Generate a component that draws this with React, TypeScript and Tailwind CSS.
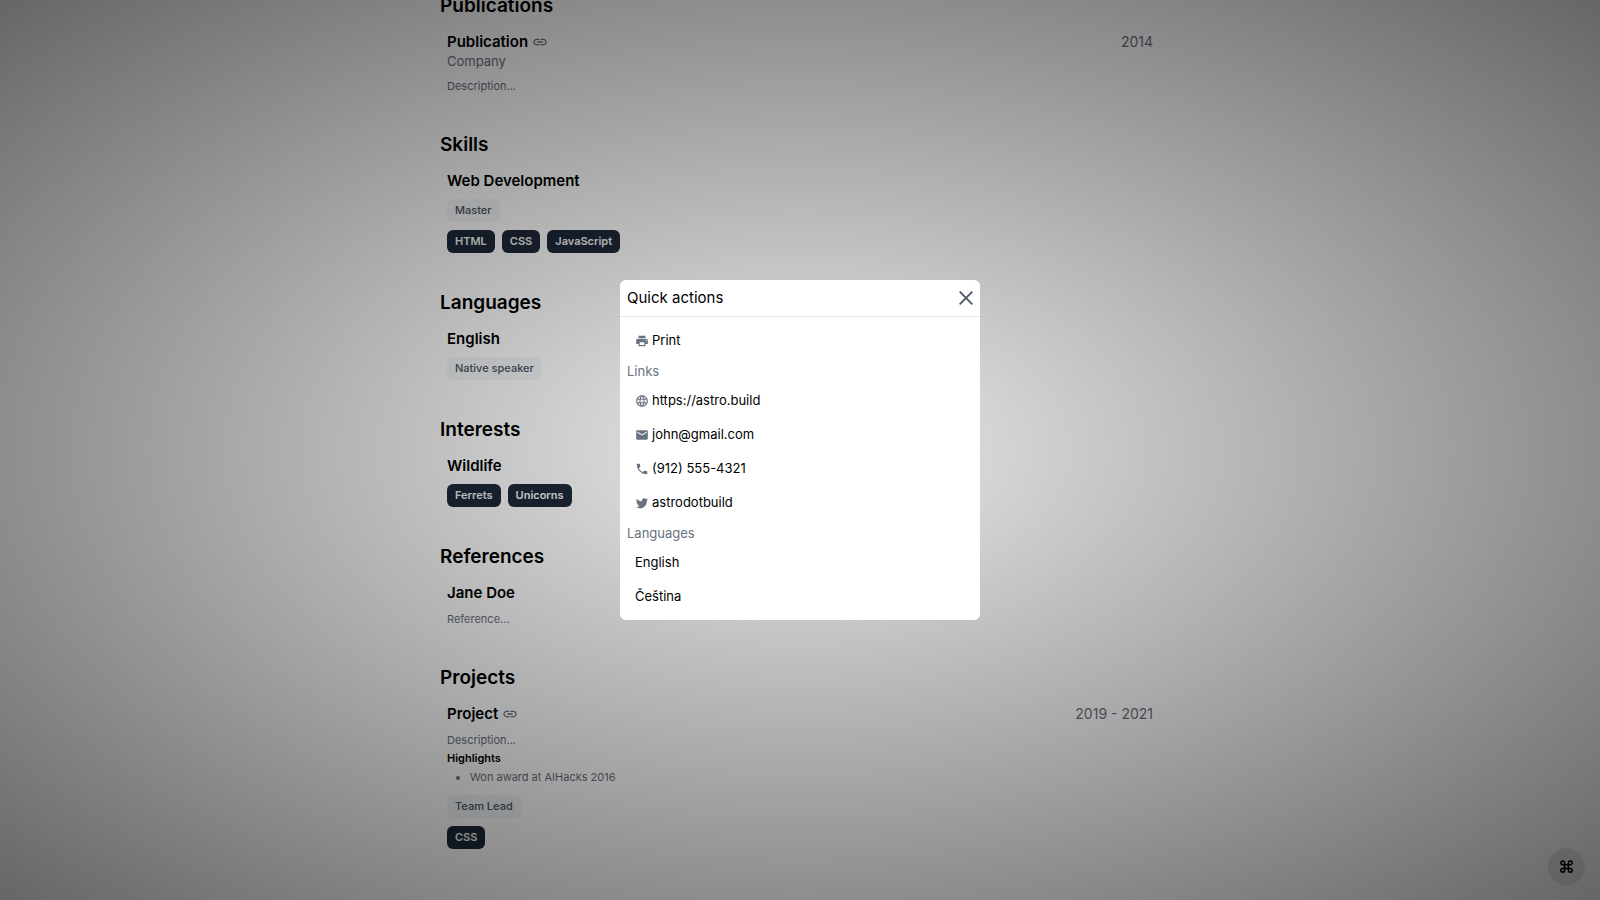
import clsx from "clsx";
import React from "react";
import { MdEmail, MdLanguage, MdLink, MdLocalPhone, MdPrint } from "react-icons/md";

function Section({ title, children }: { title: string; children: React.ReactNode }) {
  return (
    <section className="mb-9">
      <h2 className="text-[19px] leading-7 font-semibold">{title}</h2>
      <div className="px-[7px] pt-3">{children}</div>
    </section>
  );
}

function ItemHeader({ title, href, date }: { title: string; href?: string; date?: string }) {
  return (
    <div className="flex items-center justify-between text-[15px] leading-5">
      <h3 className="flex items-center gap-1 font-semibold">
        {title}
        {href && (
          <a href={href} aria-label={`Open ${title}`} className="text-gray-500">
            <MdLink className="size-4" />
          </a>
        )}
      </h3>
      {date && <time className="text-[14px] text-gray-500">{date}</time>}
    </div>
  );
}

function Tags({ items, muted = false }: { items: string[]; muted?: boolean }) {
  return (
    <ul className="mt-2 flex flex-wrap gap-[7px] text-[11px] leading-[23px]">
      {items.map((item) => (
        <li
          key={item}
          className={clsx(
            "rounded-md px-2",
            muted ? "bg-[#f4f6f8] font-medium text-gray-600" : "bg-gray-800 font-semibold text-gray-100",
          )}
        >
          {item}
        </li>
      ))}
    </ul>
  );
}

function Description({ children }: { children: React.ReactNode }) {
  return <p className="mt-[7px] text-[11px] leading-[18px] text-gray-500">{children}</p>;
}

function Resume() {
  return (
    <main className="mx-auto -mt-2 max-w-[720px]">
      <Section title="Publications">
        <ItemHeader title="Publication" href="#publication" date="2014" />
        <p className="text-[13px] leading-[18px] text-gray-500">Company</p>
        <Description>Description...</Description>
      </Section>
      <Section title="Skills">
        <ItemHeader title="Web Development" />
        <Tags items={["Master"]} muted />
        <Tags items={["HTML", "CSS", "JavaScript"]} />
      </Section>
      <Section title="Languages">
        <ItemHeader title="English" />
        <Tags items={["Native speaker"]} muted />
      </Section>
      <Section title="Interests">
        <ItemHeader title="Wildlife" />
        <Tags items={["Ferrets", "Unicorns"]} />
      </Section>
      <Section title="References">
        <ItemHeader title="Jane Doe" />
        <Description>Reference...</Description>
      </Section>
      <Section title="Projects">
        <ItemHeader title="Project" href="#project" date="2019 - 2021" />
        <Description>Description...</Description>
        <h4 className="text-[11px] leading-[19px] font-semibold">Highlights</h4>
        <ul className="list-disc pl-[23px] text-[11px] leading-[19px] text-gray-500">
          <li>Won award at AIHacks 2016</li>
        </ul>
        <Tags items={["Team Lead"]} muted />
        <Tags items={["CSS"]} />
      </Section>
    </main>
  );
}

function TwitterIcon({ className }: { className?: string }) {
  return (
    <svg viewBox="0 0 24 24" fill="currentColor" className={className}>
      <path d="M22.46 6c-.77.35-1.6.58-2.46.69.88-.53 1.56-1.37 1.88-2.38-.83.5-1.75.85-2.72 1.05C18.37 4.5 17.26 4 16 4c-2.35 0-4.27 1.92-4.27 4.29 0 .34.04.67.11.98C8.28 9.09 5.11 7.38 3 4.79c-.37.63-.58 1.37-.58 2.15 0 1.49.75 2.81 1.91 3.56-.71 0-1.37-.2-1.95-.5v.03c0 2.08 1.48 3.82 3.44 4.21a4.22 4.22 0 0 1-1.93.07 4.28 4.28 0 0 0 4 2.98 8.521 8.521 0 0 1-5.33 1.84c-.34 0-.68-.02-1.02-.06C3.44 20.29 5.7 21 8.12 21 16 21 20.33 14.46 20.33 8.79c0-.19 0-.37-.01-.56.84-.6 1.56-1.36 2.14-2.23z" />
    </svg>
  );
}

const links = [
  { label: "https://astro.build", href: "#website", icon: MdLanguage },
  { label: "john@gmail.com", href: "#email", icon: MdEmail },
  { label: "(912) 555-4321", href: "#phone", icon: MdLocalPhone },
  { label: "astrodotbuild", href: "#twitter", icon: TwitterIcon },
];

const languages = ["English", "Čeština"];

const rowClass = "flex h-[34px] w-full items-center gap-[3px] px-2";

function QuickActions() {
  return (
    <div className="fixed inset-0 flex items-center justify-center bg-[radial-gradient(ellipse,rgba(0,0,0,0.08),rgba(0,0,0,0.6))]">
      <div role="dialog" aria-labelledby="quick-actions" className="w-[360px] rounded-md bg-white">
        <div className="flex h-[37px] items-center justify-between border-b border-gray-200 px-[7px]">
          <h2 id="quick-actions" className="text-[15px]">
            Quick actions
          </h2>
          <button type="button" aria-label="Close" className="text-gray-600">
            <svg viewBox="0 0 14 14" className="size-[14px]" stroke="currentColor" strokeWidth="1.8">
              <path d="M.7.7l12.6 12.6M13.3.7L.7 13.3" />
            </svg>
          </button>
        </div>
        <div className="px-[7px] pt-[7px] pb-[6px] text-[13px]">
          <button type="button" className={rowClass}>
            <MdPrint className="size-[14px] text-gray-500" />
            Print
          </button>
          <h3 className="leading-[26px] text-gray-500">Links</h3>
          {links.map(({ label, href, icon: Icon }) => (
            <a key={label} href={href} className={rowClass}>
              <Icon className="size-[14px] text-gray-500" />
              {label}
            </a>
          ))}
          <h3 className="leading-[26px] text-gray-500">Languages</h3>
          {languages.map((language) => (
            <button key={language} type="button" className={rowClass}>
              {language}
            </button>
          ))}
        </div>
      </div>
    </div>
  );
}

export default function App(): React.JSX.Element {
  return (
    <div className="flow-root h-screen overflow-hidden bg-white font-[Inter,sans-serif] text-black">
      <Resume />
      <button
        type="button"
        aria-label="Open quick actions"
        className="fixed right-[15px] bottom-[15px] flex size-[37px] items-center justify-center rounded-full bg-gray-200"
      >
        <svg viewBox="0 0 24 24" className="size-[15px]" fill="none" stroke="currentColor" strokeWidth="2.4">
          <path d="M15 6v12a3 3 0 1 0 3-3H6a3 3 0 1 0 3 3V6a3 3 0 1 0-3 3h12a3 3 0 1 0-3-3" />
        </svg>
      </button>
      <QuickActions />
    </div>
  );
}
